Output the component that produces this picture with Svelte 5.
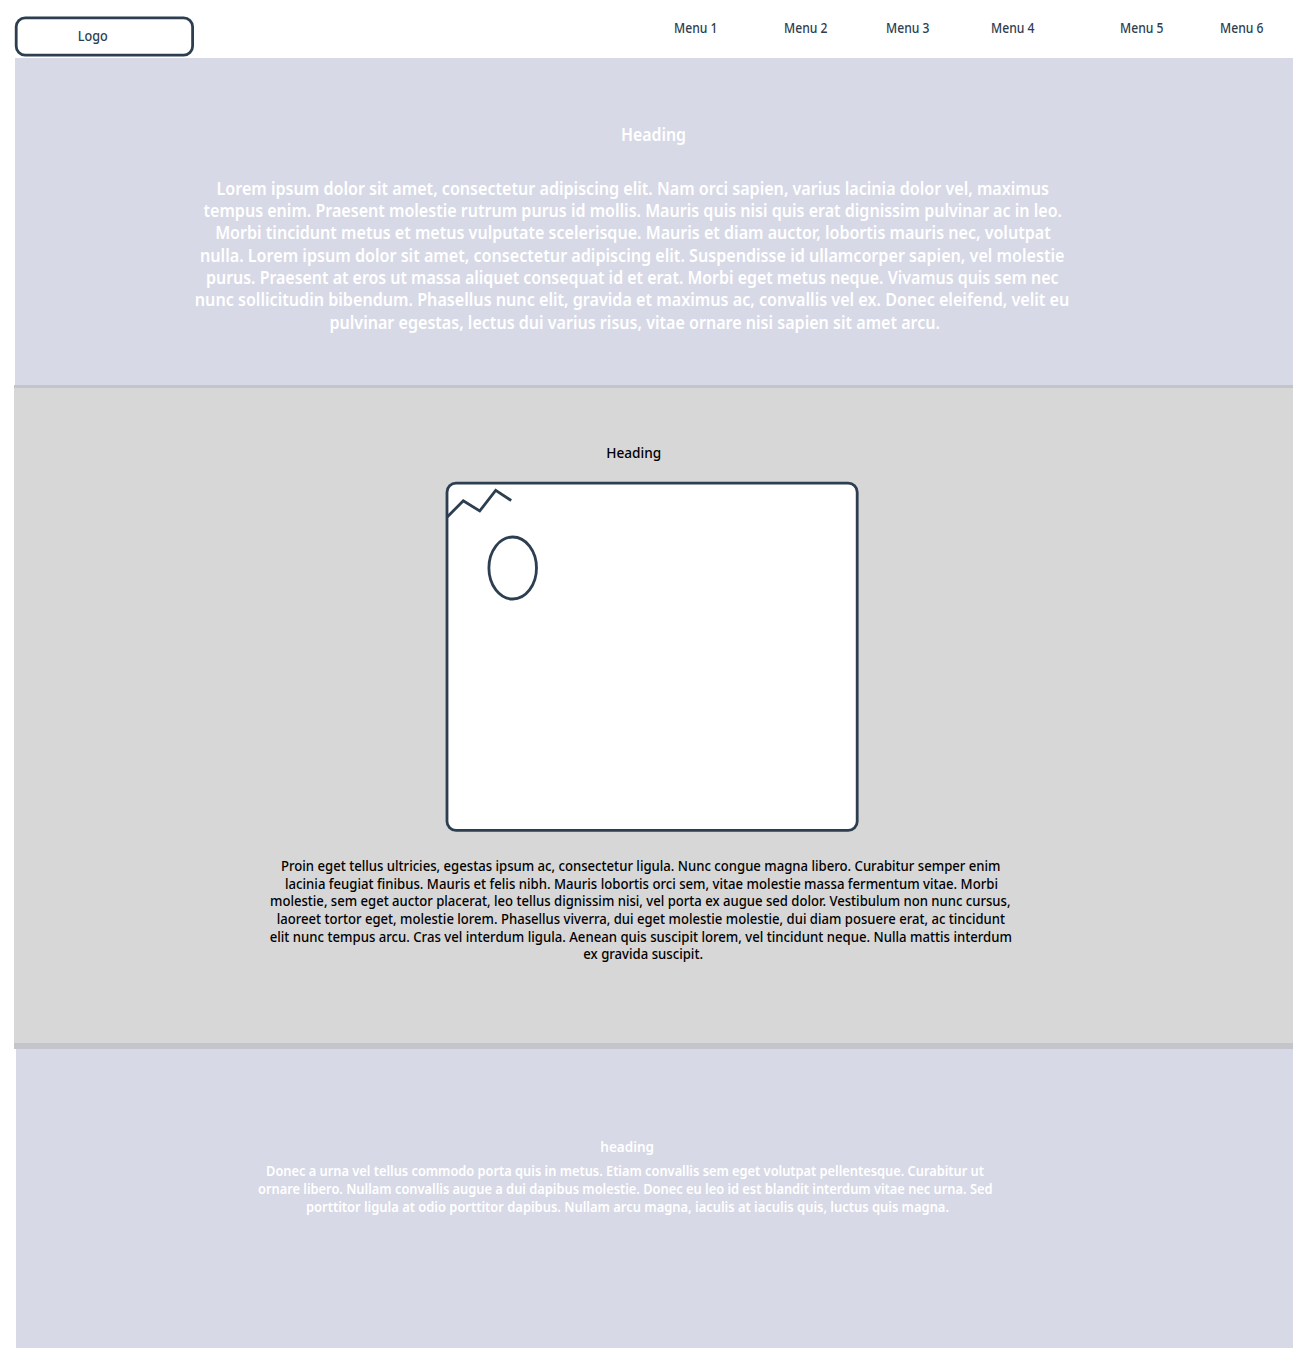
<script>
  // Each line: [text, left, width, baseline], relative to its block.
  const menu = [
    ['Menu 1', 673.7], ['Menu 2', 784], ['Menu 3', 886.3],
    ['Menu 4', 991], ['Menu 5', 1120.3], ['Menu 6', 1219.7]
  ].map(([label, left], i, all) => ({
    label,
    gap: i === 0 ? 0 : left - all[i - 1][1] - 43.5
  }));

  const heroHeading = [['Heading', 621, 65, 21.3]];
  const hero = [
    ['Lorem ipsum dolor sit amet, consectetur adipiscing elit. Nam orci sapien, varius lacinia dolor vel, maximus', 216.5, 832.5, 25.3],
    ['tempus enim. Praesent molestie rutrum purus id mollis. Mauris quis nisi quis erat dignissim pulvinar ac in leo.', 203.5, 858.5, 47.3],
    ['Morbi tincidunt metus et metus vulputate scelerisque. Mauris et diam auctor, lobortis mauris nec, volutpat', 215.2, 835.5, 69.3],
    ['nulla. Lorem ipsum dolor sit amet, consectetur adipiscing elit. Suspendisse id ullamcorper sapien, vel molestie', 200, 864.5, 92],
    ['purus. Praesent at eros ut massa aliquet consequat id et erat. Morbi eget metus neque. Vivamus quis sem nec', 206, 852.5, 114],
    ['nunc sollicitudin bibendum. Phasellus nunc elit, gravida et maximus ac, convallis vel ex. Donec eleifend, velit eu', 194.8, 874.5, 136],
    ['pulvinar egestas, lectus dui varius risus, vitae ornare nisi sapien sit amet arcu.', 329.5, 610.5, 159]
  ];
  const midHeading = [['Heading', 606.2, 55, 17.8]];
  const mid = [
    ['Proin eget tellus ultricies, egestas ipsum ac, consectetur ligula. Nunc congue magna libero. Curabitur semper enim', 281, 719.5, 21.3],
    ['lacinia feugiat finibus. Mauris et felis nibh. Mauris lobortis orci sem, vitae molestie massa fermentum vitae. Morbi', 285, 713, 39],
    ['molestie, sem eget auctor placerat, leo tellus dignissim nisi, vel porta ex augue sed dolor. Vestibulum non nunc cursus,', 270, 740.5, 56.3],
    ['laoreet tortor eget, molestie lorem. Phasellus viverra, dui eget molestie molestie, dui diam posuere erat, ac tincidunt', 276.7, 728.3, 74.3],
    ['elit nunc tempus arcu. Cras vel interdum ligula. Aenean quis suscipit lorem, vel tincidunt neque. Nulla mattis interdum', 269.7, 742.3, 92],
    ['ex gravida suscipit.', 583.3, 119.7, 109]
  ];
  const lowHeading = [['heading', 600.3, 53.7, 22]];
  const low = [
    ['Donec a urna vel tellus commodo porta quis in metus. Etiam convallis sem eget volutpat pellentesque. Curabitur ut', 266, 718, 16.3],
    ['ornare libero. Nullam convallis augue a dui dapibus molestie. Donec eu leo id est blandit interdum vitae nec urna. Sed', 258, 734.5, 34.3],
    ['porttitor ligula at odio porttitor dapibus. Nullam arcu magna, iaculis at iaculis quis, luctus quis magna.', 306, 643, 52]
  ];
</script>

{#snippet copy(lines, kind, height)}
  <svg class="copy {kind}" width="1313" {height}>
    {#each lines as [text, x, width, y]}
      <text {x} {y} textLength={width} lengthAdjust="spacingAndGlyphs">{text}</text>
    {/each}
  </svg>
{/snippet}

<div class="page">
  <header>
    <div class="logo">
      <svg width="180" height="41">
        <rect x="1.2" y="1.8" width="176.4" height="37.4" rx="9" />
        <text x="62.7" y="25" textLength="30" lengthAdjust="spacingAndGlyphs">Logo</text>
      </svg>
    </div>
    <nav>
      {#each menu as item}
        <a style:margin-left="{item.gap}px">
          <svg width="43.5" height="24">
            <text x="0" y="17" textLength="43.5" lengthAdjust="spacingAndGlyphs">{item.label}</text>
          </svg>
        </a>
      {/each}
    </nav>
  </header>

  <section class="hero">
    {@render copy(heroHeading, 'large', 50)}
    {@render copy(hero, 'large', 170)}
  </section>

  <section class="middle">
    {@render copy(midHeading, 'title', 42)}
    <svg class="picture" width="414" height="352">
      <rect x="2" y="1.2" width="410.2" height="347.2" rx="9" />
      <path d="M2 35.3 18.3 18.7 34.7 29 50.7 8.3 66.2 18.5" />
      <ellipse cx="67.7" cy="86" rx="23.8" ry="31" />
    </svg>
    {@render copy(mid, 'small', 120)}
  </section>

  <section class="low">
    {@render copy(lowHeading, 'title', 30)}
    {@render copy(low, 'small', 65)}
  </section>
</div>

<style>
  :global(body) { background: #fff; }
  .page {
    width: 1313px;
    height: 1372px;
    overflow: hidden;
    font-family: "Noto Sans", "Open Sans", sans-serif;
    font-weight: 500;
  }
  svg { display: block; overflow: visible; }
  header {
    display: flex;
    box-sizing: border-box;
    height: 58px;
    padding: 16px 0 0 15px;
    color: #2c3e50;
    font-size: 13.7px;
  }
  text { fill: currentColor; }
  rect, path, ellipse { fill: #fff; stroke: #2c3e50; stroke-width: 2.8; }
  path { fill: none; }
  .logo { width: 180px; }
  .logo text { font-size: 14px; }
  nav { display: flex; margin-left: 478.7px; }
  section { box-sizing: border-box; }
  .large { font-size: 18.3px; font-weight: 650; }
  .title { font-size: 15px; }
  .small { font-size: 14.4px; }
  .hero {
    width: 1277.5px;
    height: 327px;
    margin-left: 15.3px;
    padding-top: 62px;
    background: #d7d9e6;
    color: #fff;
  }
  .hero .copy { margin-left: -15.3px; }
  .middle {
    width: 1278.6px;
    height: 664px;
    margin-left: 14.2px;
    padding-top: 52px;
    border-top: 3.4px solid #c3c5cd;
    border-bottom: 6px solid #c3c5cb;
    background: #d7d7d7;
    color: #000;
  }
  .middle .copy { margin-left: -14.2px; }
  .picture { margin: 0 0 16px 430.8px; }
  .low {
    width: 1276.6px;
    height: 299px;
    margin-left: 16.2px;
    padding-top: 81px;
    background: #d7d9e6;
    color: #fff;
  }
  .low .copy { margin-left: -16.2px; }
  .low .title, .low .small { font-weight: 600; }
</style>
